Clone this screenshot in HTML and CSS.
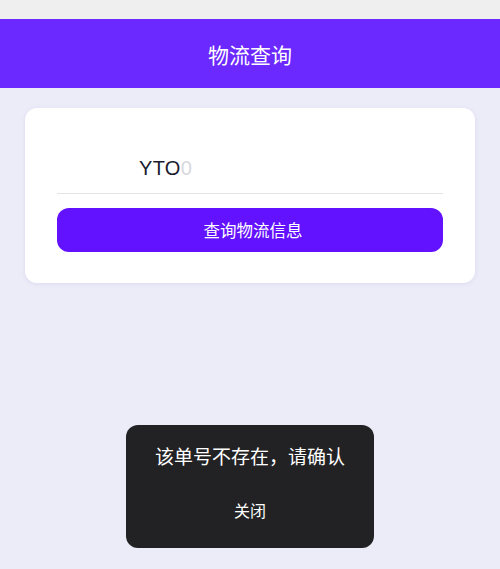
FILE: index.html
```html
<!DOCTYPE html>
<html lang="zh">
<head>
<meta charset="utf-8">
<link rel="stylesheet" href="styles.css">
</head>
<body>
<div class="statusbar"></div>
<header class="header">物流查询</header>
<main class="main">
  <section class="card">
    <div class="field"><span class="num">YTO</span><span class="num-faint">0</span></div>
    <button class="btn">查询物流信息</button>
  </section>
</main>
<div class="toast">
  <div class="toast-msg">该单号不存在，请确认</div>
  <div class="toast-close">关闭</div>
</div>
</body>
</html>
```
FILE: styles.css
```css
html, body {
  margin: 0;
  padding: 0;
}
body {
  width: 500px;
  height: 569px;
  background: #ecebf8;
  font-family: "Noto Sans CJK SC", "Noto Sans", sans-serif;
  position: relative;
  overflow: hidden;
}
.statusbar {
  height: 19px;
  background: #efefef;
}
.header {
  height: 69px;
  background: #6b28ff;
  color: #ffffff;
  font-size: 21px;
  display: flex;
  align-items: center;
  justify-content: center;
}
.main {
  padding: 20px 25px 0;
}
.card {
  background: #ffffff;
  border-radius: 12px;
  box-shadow: 0 1px 4px rgba(90, 80, 160, 0.10);
  padding: 36px 32px 31px;
  display: flex;
  flex-direction: column;
}
.field {
  height: 49px;
  border-bottom: 1px solid #e3e3e6;
  display: flex;
  align-items: center;
  padding-left: 82px;
  font-family: "Liberation Sans", "Noto Sans", sans-serif;
  font-size: 20px;
  letter-spacing: 0.3px;
}
.num {
  color: #1a1a30;
}
.num-faint {
  color: #d8d8dc;
}
.btn {
  margin-top: 14px;
  height: 44px;
  border: none;
  border-radius: 12px;
  background: #6212ff;
  color: #ffffff;
  font-family: "Noto Sans CJK SC", "Noto Sans", sans-serif;
  font-size: 16.5px;
  padding: 0 0 0 6px;
}
.toast {
  position: absolute;
  left: 126px;
  top: 425px;
  width: 248px;
  height: 123px;
  background: #222224;
  border-radius: 12px;
  color: #ffffff;
  display: flex;
  flex-direction: column;
  align-items: center;
}
.toast-msg {
  font-size: 19px;
  margin-top: 18px;
  line-height: 26px;
}
.toast-close {
  font-size: 16px;
  margin-top: 31px;
  line-height: 20px;
}
```
